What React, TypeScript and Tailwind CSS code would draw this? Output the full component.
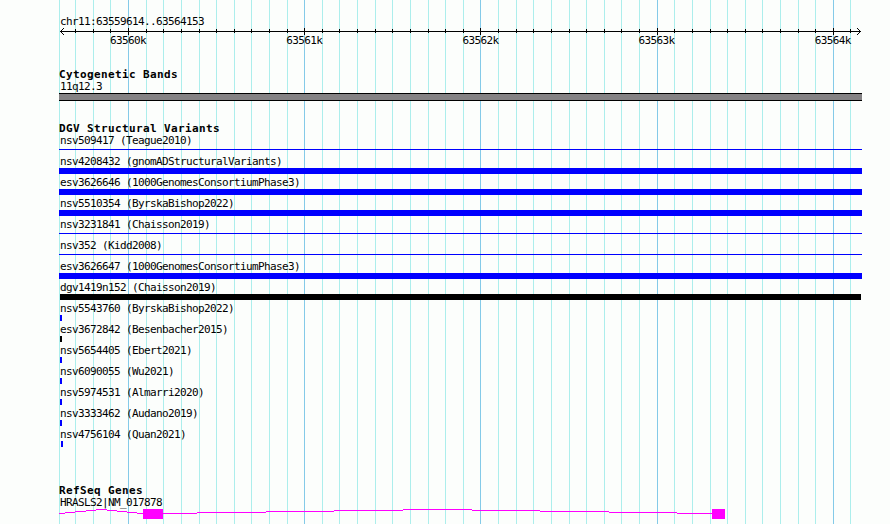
const minorLines = [
  59, 75, 93, 110, 146, 163, 181, 199, 216, 234, 251, 269, 287, 322, 339, 357, 375, 392, 410, 428,
  445, 463, 498, 516, 533, 551, 569, 586, 604, 621, 639, 674, 692, 710, 727, 745, 762, 780, 798,
  815, 850,
];
const majorLines = [128, 304, 480, 657, 833];
const axisLabels = ["63560k", "63561k", "63562k", "63563k", "63564k"];

type Shape = "thin" | "thick" | "group" | "mark" | "darkMark" | "lateMark";

const variants: { label: string; shape: Shape }[] = [
  { label: "nsv509417 (Teague2010)", shape: "thin" },
  { label: "nsv4208432 (gnomADStructuralVariants)", shape: "thick" },
  { label: "esv3626646 (1000GenomesConsortiumPhase3)", shape: "thick" },
  { label: "nsv5510354 (ByrskaBishop2022)", shape: "thick" },
  { label: "nsv3231841 (Chaisson2019)", shape: "thin" },
  { label: "nsv352 (Kidd2008)", shape: "thin" },
  { label: "esv3626647 (1000GenomesConsortiumPhase3)", shape: "thick" },
  { label: "dgv1419n152 (Chaisson2019)", shape: "group" },
  { label: "nsv5543760 (ByrskaBishop2022)", shape: "mark" },
  { label: "esv3672842 (Besenbacher2015)", shape: "darkMark" },
  { label: "nsv5654405 (Ebert2021)", shape: "mark" },
  { label: "nsv6090055 (Wu2021)", shape: "mark" },
  { label: "nsv5974531 (Almarri2020)", shape: "mark" },
  { label: "nsv3333462 (Audano2019)", shape: "mark" },
  { label: "nsv4756104 (Quan2021)", shape: "lateMark" },
];

const shapeClass: Record<Shape, string> = {
  thin: "mt-[2px] h-px w-full bg-[#0000ff]",
  thick: "h-[6px] w-full bg-[#0000ff]",
  group: "ml-px h-[6px] w-[801px] bg-black",
  mark: "ml-px h-[6px] w-[2px] bg-[#0000ff]",
  darkMark: "ml-px h-[6px] w-[2px] bg-black",
  lateMark: "ml-[2px] h-[6px] w-[2px] bg-[#0000ff]",
};

// Intron line runs as [start, end, y], relative to the gene track.
const introns = [
  [0, 6, 4], [6, 16, 3], [16, 27, 2], [27, 37, 1], [37, 48, 0], [48, 58, 1], [58, 68, 2],
  [68, 78, 3], [78, 84, 4], [104, 138, 4], [138, 207, 3], [207, 275, 2], [275, 344, 1],
  [344, 413, 0], [413, 481, 1], [481, 550, 2], [550, 618, 3], [618, 653, 4],
];

function GridLines() {
  return (
    <svg className="absolute inset-0" width="890" height="524" shapeRendering="crispEdges">
      {minorLines.map((x) => (
        <rect key={x} x={x} y="0" width="1" height="524" fill="#aceeec" />
      ))}
      {majorLines.map((x) => (
        <rect key={x} x={x} y="0" width="1" height="524" fill="#84cae8" />
      ))}
    </svg>
  );
}

function Axis() {
  return (
    <svg className="block h-[7px] w-[803px]" viewBox="59 28 803 7" shapeRendering="crispEdges">
      <rect x="60" y="31" width="801" height="1" />
      {minorLines.slice(1).map((x) => (
        <rect key={x} x={x} y="29" width="1" height="4" />
      ))}
      {majorLines.map((x) => (
        <rect key={x} x={x} y="28" width="1" height="7" />
      ))}
      {[1, 2, 3].map((d) => (
        <g key={d}>
          <rect x={60 + d} y={31 - d} width="1" height="1" />
          <rect x={60 + d} y={31 + d} width="1" height="1" />
          <rect x={860 - d} y={31 - d} width="1" height="1" />
          <rect x={860 - d} y={31 + d} width="1" height="1" />
        </g>
      ))}
    </svg>
  );
}

function Label({ children }: { children: string }) {
  return <div className="h-[11px] pl-px text-[11px] leading-[11px] tracking-[-0.622px]">{children}</div>;
}

function Heading({ children }: { children: string }) {
  return <h2 className="h-[13px] pt-px text-[11px] font-bold leading-[13px] tracking-[0.378px]">{children}</h2>;
}

export default function App() {
  return (
    <main className="relative h-[524px] w-[890px] overflow-hidden whitespace-pre bg-[#fcfefc] font-['DejaVu_Sans_Mono',monospace] text-black">
      <GridLines />
      <div className="relative ml-[59px] flex w-[803px] flex-col">
        <header className="h-[67px] pt-[16px]">
          <Label>chr11:63559614..63564153</Label>
          <div className="mt-px">
            <Axis />
          </div>
          <div className="ml-[50px] flex h-[11px]">
            {axisLabels.map((label) => (
              <div key={label} className="w-[176.2px] shrink-0">
                <Label>{label}</Label>
              </div>
            ))}
          </div>
        </header>

        <section className="h-[54px]">
          <Heading>Cytogenetic Bands</Heading>
          <div className="mt-px">
            <Label>11q12.3</Label>
          </div>
          <div className="mt-px h-[8px] border-y border-black bg-[#848284]" />
        </section>

        <section className="h-[362px]">
          <Heading>DGV Structural Variants</Heading>
          <div className="mt-px flex flex-col">
            {variants.map(({ label, shape }) => (
              <div key={label} className="h-[21px]">
                <Label>{label}</Label>
                <div className="flex pt-px">
                  <div className={shapeClass[shape]} />
                </div>
              </div>
            ))}
          </div>
        </section>

        <section>
          <Heading>RefSeq Genes</Heading>
          <div className="mt-px">
            <Label>HRASLS2|NM_017878</Label>
          </div>
          <svg className="mt-px block" width="803" height="10" shapeRendering="crispEdges" fill="#ff00ff">
            {introns.map(([start, end, y]) => (
              <rect key={start} x={start} y={y} width={end - start} height="1" />
            ))}
            <rect x="84" y="0" width="20" height="10" />
            <rect x="653" y="0" width="13" height="10" />
          </svg>
        </section>
      </div>
    </main>
  );
}
